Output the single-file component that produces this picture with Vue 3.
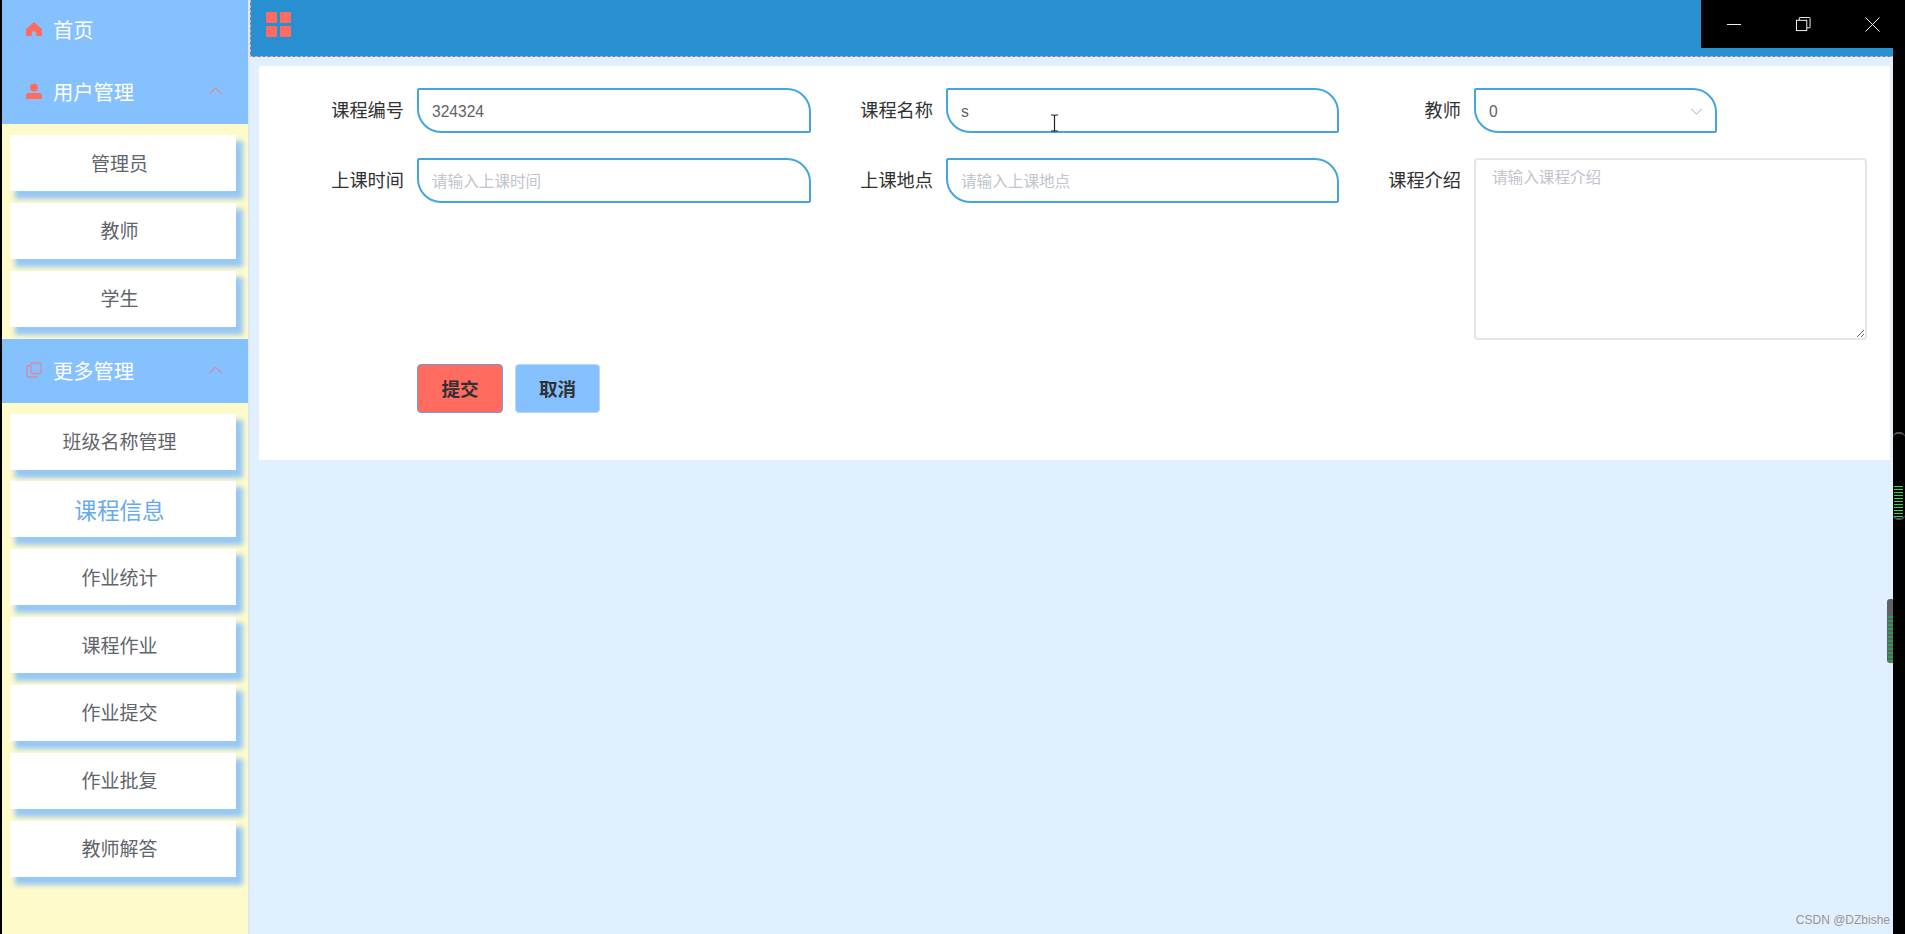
<template>
  <div class="page">
    <aside class="side">
      <div class="menu-head first">
        <svg class="head-icon" viewBox="0 0 16 16"><path d="M8 1 L16 8.2 V15 H10.2 V10.5 H5.8 V15 H0 V8.2 Z" fill="#ff6b5e" /></svg>
        <span>首页</span>
      </div>
      <div v-for="group in menu" :key="group.title">
        <div class="menu-head">
          <svg v-if="group.icon === 'user'" class="head-icon" viewBox="0 0 16 16">
            <circle cx="8" cy="4.5" r="4" fill="#ff6b5e" />
            <path d="M0 16 V13 Q0 10 3 10 H13 Q16 10 16 13 V16 Z" fill="#ff6b5e" />
          </svg>
          <svg v-else class="head-icon" viewBox="0 0 18 18" fill="none" stroke="#e8808f" stroke-width="1.3">
            <rect x="5.5" y="1" width="11.5" height="12" rx="2" />
            <path d="M5 4 H3 Q1 4 1 6 V15 Q1 17 3 17 H11 Q13 17 13 15" />
          </svg>
          <span>{{ group.title }}</span>
          <svg class="head-arrow" viewBox="0 0 16 9" fill="none" stroke="#e8808f" stroke-width="1.2"><path d="M1 8 L8 1 L15 8" /></svg>
        </div>
        <div class="sub-list">
          <div v-for="item in group.items" :key="item" class="sub-item" :class="{ active: item === '课程信息' }">{{ item }}</div>
        </div>
      </div>
    </aside>

    <main class="main">
      <header class="top">
        <div class="grid-icon"><i></i><i></i><i></i><i></i></div>
      </header>
      <div class="content">
        <form class="card" @submit.prevent>
          <div class="form-grid">
            <div class="field">
              <label>课程编号</label>
              <input class="box" value="324324" />
            </div>
            <div class="field">
              <label>课程名称</label>
              <input class="box" value="s" />
            </div>
            <div class="field">
              <label>教师</label>
              <div class="box select">
                <span>0</span>
                <svg viewBox="0 0 14 8" fill="none" stroke="#c0c4cc" stroke-width="1.2"><path d="M1 1 L7 7 L13 1" /></svg>
              </div>
            </div>
            <div class="field">
              <label>上课时间</label>
              <input class="box" placeholder="请输入上课时间" />
            </div>
            <div class="field">
              <label>上课地点</label>
              <input class="box" placeholder="请输入上课地点" />
            </div>
            <div class="field">
              <label>课程介绍</label>
              <textarea placeholder="请输入课程介绍"></textarea>
            </div>
          </div>
          <div class="actions">
            <button class="btn submit">提交</button>
            <button class="btn cancel">取消</button>
          </div>
        </form>
      </div>
      <div class="mark">CSDN @DZbishe</div>
    </main>

    <!-- 窗口控制按钮 -->
    <div class="win-btns">
      <svg viewBox="0 0 16 16"><path d="M0 8 H15" /></svg>
      <svg viewBox="0 0 16 16"><rect x="0.5" y="3.5" width="11" height="11" /><path d="M3.5 3.5 V1 Q3.5 0.5 4 0.5 H14 Q15 0.5 15 1.5 V11 Q15 11.5 14.5 11.5 H11.5" /></svg>
      <svg viewBox="0 0 16 16"><path d="M0.5 0.5 L15.5 15.5 M15.5 0.5 L0.5 15.5" /></svg>
    </div>

    <!-- 文字光标 -->
    <svg class="ibeam" viewBox="0 0 9 18" fill="none" stroke="#222" stroke-width="1.2"><path d="M1 1 H3.5 Q4.5 1 4.5 2 V16 Q4.5 17 3.5 17 H1 M8 1 H5.5 Q4.5 1 4.5 2 M4.5 16 Q4.5 17 5.5 17 H8" /></svg>

    <!-- 右侧贴边小部件 -->
    <div class="dock">
      <i v-for="n in 11" :key="n"></i>
    </div>
    <div class="dock-two">
      <i v-for="n in 12" :key="n"></i>
    </div>
  </div>
</template>

<script setup>
const menu = [
  { title: '用户管理', icon: 'user', items: ['管理员', '教师', '学生'] },
  {
    title: '更多管理',
    icon: 'copy',
    items: ['班级名称管理', '课程信息', '作业统计', '课程作业', '作业提交', '作业批复', '教师解答'],
  },
]
</script>

<style>
html,
body {
  margin: 0;
  overflow: hidden;
}
</style>

<style scoped>
.page {
  position: relative;
  display: flex;
  box-sizing: border-box;
  height: 934px;
  padding: 0 12px 0 2px;
  overflow: hidden;
  background: #000;
  font-family: 'Liberation Sans', 'Noto Sans CJK SC', sans-serif;
}

.side {
  flex: none;
  width: 246px;
  height: 100%;
  overflow: hidden;
  background: #fefbcb;
  border-right: 2px solid #dfe6ee;
}

.menu-head {
  display: flex;
  align-items: center;
  box-sizing: border-box;
  height: 64px;
  padding: 0 0 2px 24px;
  background: #85c1ff;
  color: #fff;
  font-size: 20.3px;
}

.first {
  height: 60px;
  padding-bottom: 3px;
}

.head-icon {
  flex: none;
  width: 16px;
  height: 16px;
  margin-right: 11px;
}

.head-arrow {
  width: 15px;
  height: 8px;
  margin-left: auto;
  margin-right: 25px;
}

.sub-list {
  padding-top: 11px;
}

.sub-item {
  display: flex;
  align-items: center;
  justify-content: center;
  box-sizing: border-box;
  width: 226px;
  height: 56px;
  margin: 0 0 11.85px 8px;
  padding: 0 7px 2px 0;
  background: #fff;
  box-shadow: 6px 7px 5px 1px #97c7f5;
  color: #60646b;
  font-size: 19px;
}

.sub-item.active {
  padding-bottom: 0;
  color: #66aaee;
  font-size: 22.6px;
}

.main {
  flex: 1;
  min-width: 0;
  display: flex;
  flex-direction: column;
  background: #e1f0ff;
}

.top {
  flex: none;
  display: flex;
  align-items: center;
  box-sizing: border-box;
  height: 57px;
  padding: 0 0 7px 15px;
  background: #2890d0;
  border-left: 1px dashed #f59a9a;
  border-bottom: 1px dashed #f59a9a;
}

.grid-icon {
  display: grid;
  grid-template-columns: 11px 11px;
  gap: 3px;
}

.grid-icon i {
  height: 11px;
  background: #ff6b5e;
  border-radius: 1px;
}

.content {
  padding: 9px 3px 0 9px;
}

.card {
  height: 394px;
  box-sizing: border-box;
  padding: 22px 0 0 38px;
  background: #fff;
}

.form-grid {
  display: grid;
  grid-template-columns: 529px 528px 1fr;
  grid-template-rows: 45px 181px;
  row-gap: 25px;
}

.field {
  display: flex;
  align-items: flex-start;
}

.field label {
  flex: none;
  width: 107px;
  margin-right: 13px;
  color: #303133;
  font-size: 18.2px;
  line-height: 46px;
  text-align: right;
}

.box {
  box-sizing: border-box;
  width: 394px;
  height: 45px;
  padding: 2px 13px 0;
  background: #fff;
  border: 2px solid #45a5dd;
  border-radius: 2px 24px 2px 24px;
  color: #606266;
  font-family: inherit;
  font-size: 15.6px;
  outline: none;
}

.field:nth-child(3n + 2) .box {
  width: 393px;
}

.box::placeholder,
textarea::placeholder {
  color: #c0c4cc;
}

.box.select {
  display: flex;
  align-items: center;
  justify-content: space-between;
  width: 243px;
  padding-right: 12px;
}

.select svg {
  width: 13px;
  height: 7px;
}

textarea {
  box-sizing: border-box;
  width: 393px;
  height: 182px;
  padding: 6px 16px;
  background: #fff;
  border: 2px solid #e3e5ec;
  border-radius: 4px;
  color: #606266;
  font-family: inherit;
  font-size: 15.6px;
  line-height: 1.5;
  outline: none;
}

.actions {
  display: flex;
  gap: 12px;
  margin: 25px 0 0 120px;
}

.btn {
  width: 86px;
  height: 49px;
  padding: 0 0 2px;
  border-radius: 4px;
  color: #303133;
  font-family: inherit;
  font-size: 18.6px;
  font-weight: 700;
}

.submit {
  background: #ff6b5e;
  border: 1.5px solid #6d9fe0;
}

.cancel {
  width: 85px;
  background: #85c1ff;
  border: 1.5px solid #b4d6f8;
}

.mark {
  position: absolute;
  right: 15px;
  bottom: 7px;
  color: #969696;
  font-size: 12px;
}

.win-btns {
  position: absolute;
  top: 0;
  right: 0;
  display: flex;
  align-items: center;
  justify-content: flex-end;
  gap: 54px;
  box-sizing: border-box;
  width: 204px;
  height: 48px;
  padding: 0 25px 0 0;
  background: #000;
}

.win-btns svg {
  width: 15px;
  height: 15px;
  fill: none;
  stroke: #fff;
  stroke-width: 1;
}

.ibeam {
  position: absolute;
  left: 1050px;
  top: 114px;
  width: 9px;
  height: 18px;
}

.dock {
  position: absolute;
  right: 0;
  top: 432px;
  box-sizing: border-box;
  width: 12px;
  height: 88px;
  padding-top: 52px;
  border: 1px solid #555;
  border-width: 2px 0;
  border-radius: 5px;
}

.dock i {
  display: block;
  height: 1px;
  margin: 0 2px 2px 1px;
  background: #2ddb5a;
}

.dock-two {
  position: absolute;
  right: 12px;
  top: 599px;
  box-sizing: border-box;
  width: 6px;
  height: 64px;
  padding-top: 17px;
  background: #5f6366;
  border-radius: 3px 0 0 3px;
  overflow: hidden;
}

.dock-two i {
  display: block;
  height: 2px;
  margin: 0 0 2px 1px;
  background: #2f9e58;
}
</style>
